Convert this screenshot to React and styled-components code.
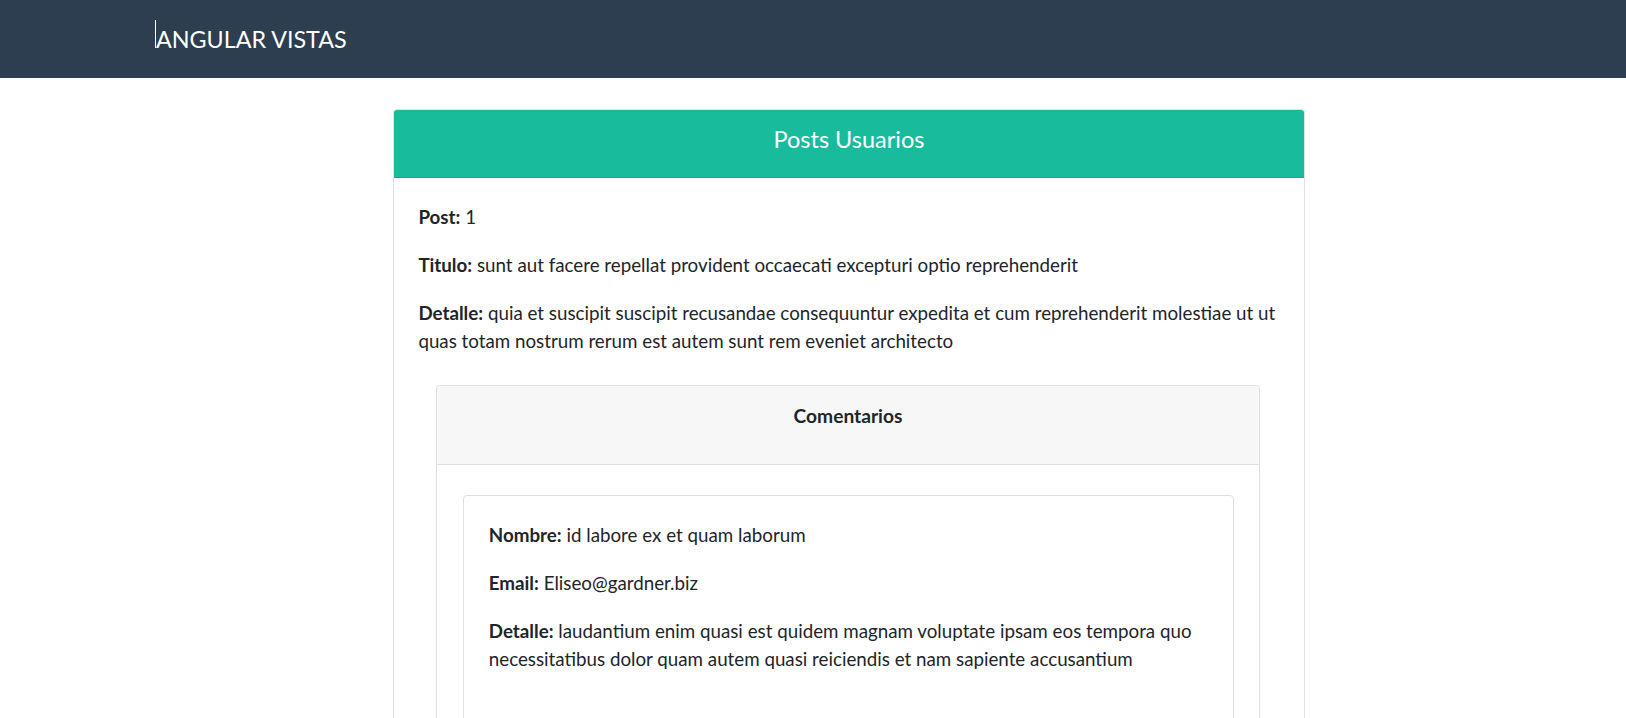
import React from "react";
import styled, { createGlobalStyle } from "styled-components";

const post = {
  id: 1,
  title: "sunt aut facere repellat provident occaecati excepturi optio reprehenderit",
  body: "quia et suscipit suscipit recusandae consequuntur expedita et cum reprehenderit molestiae ut ut quas totam nostrum rerum est autem sunt rem eveniet architecto",
};

const comments = [
  {
    name: "id labore ex et quam laborum",
    email: "Eliseo@gardner.biz",
    body: "laudantium enim quasi est quidem magnam voluptate ipsam eos tempora quo necessitatibus dolor quam autem quasi reiciendis et nam sapiente accusantium",
  },
];

const App = () => {
  return (
    <div>
      <GlobalStyle />
      <Navbar>
        <Brand>ANGULAR VISTAS</Brand>
      </Navbar>
      <Main>
        <Card>
          <CardHeader>
            <Title>Posts Usuarios</Title>
          </CardHeader>
          <CardBody>
            <Field>
              <b>Post:</b> {post.id}
            </Field>
            <Field>
              <b>Titulo:</b> {post.title}
            </Field>
            <Field>
              <b>Detalle:</b> {post.body}
            </Field>
            <CommentsCard>
              <CommentsHeader>
                <Field>
                  <b>Comentarios</b>
                </Field>
              </CommentsHeader>
              <CommentsBody>
                {comments.map((c, i) => (
                  <CommentCard key={i}>
                    <Field>
                      <b>Nombre:</b> {c.name}
                    </Field>
                    <Field>
                      <b>Email:</b> {c.email}
                    </Field>
                    <Field>
                      <b>Detalle:</b> {c.body}
                    </Field>
                  </CommentCard>
                ))}
              </CommentsBody>
            </CommentsCard>
          </CardBody>
        </Card>
      </Main>
    </div>
  );
};

export default App;

const GlobalStyle = createGlobalStyle`
  body {
    margin: 0;
    font-family: Lato, "Open Sans", sans-serif;
    color: #212529;
    background: #fff;
  }
`;

const Navbar = styled.nav`
  display: flex;
  align-items: center;
  height: 78px;
  padding-left: 156px;
  background: #2c3e50;
  box-sizing: border-box;
`;

const Brand = styled.span`
  position: relative;
  font-size: 23.3px;
  line-height: 1;
  color: #fff;
  margin-top: 1px;
  &::before {
    content: "";
    position: absolute;
    left: -1px;
    top: -8px;
    width: 1px;
    height: 28px;
    background: #fff;
  }
`;

const Main = styled.main`
  display: flex;
  padding: 31px 0 0 393px;
`;

const Card = styled.div`
  width: 912px;
  border: 1px solid #dfdfdf;
  border-radius: 4px;
  box-sizing: border-box;
  overflow: hidden;
`;

const CardHeader = styled.div`
  background: #18bc9c;
  border-bottom: 1px solid #16ad8f;
  padding: 14.6px 24px 0;
  height: 68px;
  box-sizing: border-box;
  text-align: center;
`;

const Title = styled.h3`
  margin: 0;
  font-size: 23.5px;
  font-weight: 400;
  line-height: 1.2;
  color: #fff;
`;

const CardBody = styled.div`
  padding: 25px 24.4px 0;
`;

const Field = styled.p`
  margin: 0 0 20.4px;
  font-size: 18.75px;
  line-height: 27.6px;
  b {
    font-weight: 700;
  }
`;

const CommentsCard = styled.div`
  margin: 31px 20px 0 18px;
  border: 1px solid #dfdfdf;
  border-radius: 4px;
  overflow: hidden;
`;

const CommentsHeader = styled.div`
  height: 79px;
  box-sizing: border-box;
  padding: 16px 24px 0;
  background: #f7f7f7;
  border-bottom: 1px solid #dfdfdf;
  text-align: center;
  p {
    font-size: 19.2px;
  }
`;

const CommentsBody = styled.div`
  padding: 30px 24.4px 24.4px 26px;
`;

const CommentCard = styled.div`
  border: 1px solid #dfdfdf;
  border-radius: 4px;
  padding: 25px 24.4px 30px;
  min-height: 250px;
`;
